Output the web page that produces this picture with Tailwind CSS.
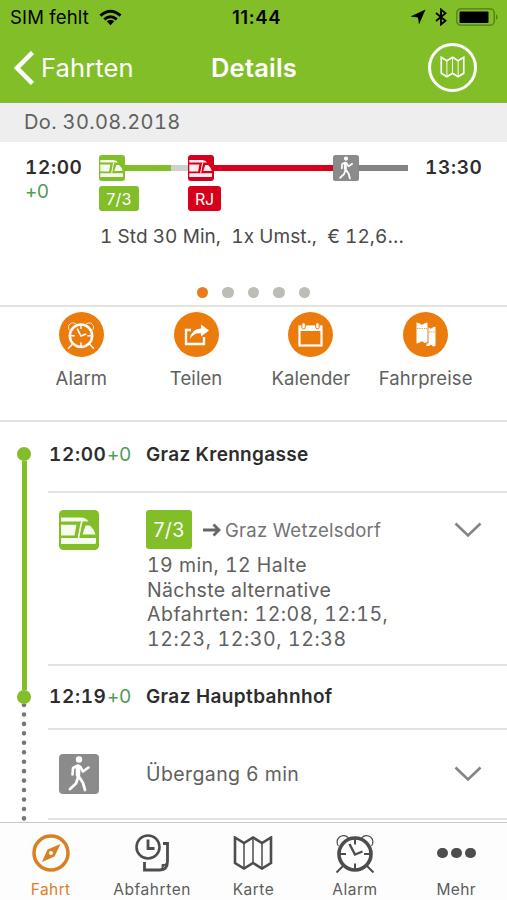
<!DOCTYPE html>
<html lang="de">
<head>
<meta charset="utf-8">
<title>Details</title>
<script src="https://cdn.jsdelivr.net/npm/@tailwindcss/browser@4"></script>
</head>
<body class="w-[507px] h-[900px] overflow-hidden bg-white font-[Inter,sans-serif] text-[#606060] whitespace-nowrap">
<svg class="hidden">
  <defs>
    <symbol id="train" viewBox="0 0 40 40">
      <rect width="40" height="40" rx="4.5" fill="currentColor"/>
      <path d="M2 7.500H22Q27 7.500 29.500 11.500H2ZM2 14.800H17.500L15.500 25.500H2ZM26.500 15.500H31Q35 19 36.500 24.500H23.500ZM2 28H37V32.500Q37 34 35.500 34H2Z" fill="#fff" fill-opacity=".93"/>
      <path d="M23 11.500L22 14.500L19.700 26.500V28" fill="none" stroke="#fff" stroke-opacity=".93" stroke-width="1.600"/>
    </symbol>
    <symbol id="walk" viewBox="0 0 40 40">
      <rect width="40" height="40" rx="4" fill="#8b8b8b"/>
      <circle cx="20" cy="5.500" r="3.200" fill="#fff"/>
      <g fill="none" stroke="#fff" stroke-linecap="round" stroke-linejoin="round">
        <path d="M18 12L14 14L13.500 20.500M21 12.500L24 17.500L29.500 13.500" stroke-width="2.600"/>
        <path d="M19 12.500V21" stroke-width="4.500"/>
        <path d="M19 23.500L17 29.500L11 35M20.500 23.500L24 29L26 36" stroke-width="2.800"/>
      </g>
    </symbol>
    <symbol id="map" viewBox="0 0 40 34">
      <path d="M2 1.500L11 7L20 1.500L29 7L38 1.500V27L29 32.500L20 27L11 32.500L2 27Z" fill="none" stroke="currentColor" stroke-width="2.600"/>
      <path d="M11 7V32M20 2.500V27M29 7V32" fill="none" stroke="currentColor" stroke-width="1.500"/>
    </symbol>
    <symbol id="clock" viewBox="0 0 40 40">
      <g fill="none" stroke="currentColor">
        <path d="M3.500 13A6.200 6.200 0 1 1 13.500 5M26.500 5A6.200 6.200 0 1 1 36.500 13" stroke-width="1.200"/>
        <circle cx="20" cy="21" r="16" stroke-width="3.600"/>
        <path d="M20 5V11.500M20 30.500V37M4 21H11M29 21H36M8 33L1.500 39.500M32 33L38.500 39.500" stroke-width="2"/>
        <path d="M14.500 11L20 21.500L27.500 18.500" stroke-width="2.400"/>
      </g>
    </symbol>
  </defs>
</svg>

<header class="h-[103px] bg-[#82be28] border-b border-[#8fae5c] flex flex-col">
  <div class="h-[34px] grid grid-cols-3 items-center text-black text-[18.500px]">
    <div class="flex items-center pl-[10px] gap-[10px] pt-px">
      <span class="tracking-[0.150px]">SIM fehlt</span>
      <svg class="w-[23px] h-[17px]" viewBox="0 0 24 17" fill="none" stroke="#000" stroke-width="3"><path d="M1.500 6.500Q12-2.500 22.500 6.500M5.500 10.500Q12 4.800 18.500 10.500"/><path d="M8 12.500Q12 9.500 16 12.500L12 16.500Z" fill="#000" stroke="none"/></svg>
    </div>
    <div class="text-center font-semibold tracking-[0.600px] pl-[6px] pt-px">11:44</div>
    <div class="flex items-center justify-end pr-[8px] gap-[9px]">
      <svg class="w-[16px] h-[16px]" viewBox="0 0 16 16"><path d="M15.500 .5L9 15.500L8 8.500L.5 7.500Z"/></svg>
      <svg class="w-[12px] h-[18px]" viewBox="0 0 12 18" fill="none" stroke="#000" stroke-width="1.800"><path d="M1 5L10.500 12.800L6 16.500V1.500L10.500 5.200L1 13"/></svg>
      <svg class="w-[43px] h-[18px]" viewBox="0 0 43 18"><rect x=".8" y=".8" width="37.400" height="16.400" rx="4" fill="none" stroke="#517a17" stroke-width="1.300"/><rect x="3.500" y="3.500" width="29" height="11.500" rx="1"/><path d="M40 6Q43 9 40 12Z" fill="#517a17"/></svg>
    </div>
  </div>
  <div class="h-[68px] grid grid-cols-3 items-center text-white text-[25.500px]">
    <div class="flex items-center pl-[14px] gap-[7px]">
      <svg class="w-[20px] h-[34px]" viewBox="0 0 20 34" fill="none" stroke="#fff" stroke-width="4.500"><path d="M18.500 1.500L3 17L18.500 32.500"/></svg>
      <span class="tracking-[0.100px]">Fahrten</span>
    </div>
    <div class="text-center font-semibold tracking-[0.200px] pl-px">Details</div>
    <div class="flex justify-end pr-[30px] pb-[2px]">
      <div class="size-[49px] rounded-full border-[3px] border-white flex items-center justify-center">
        <svg class="w-[25px] h-[22px]"><use href="#map"/></svg>
      </div>
    </div>
  </div>
</header>

<div class="h-[39px] bg-[#eeeeee] pl-[24px] pb-px flex items-center text-[20px] tracking-[0.350px] tabular-nums">Do. 30.08.2018</div>

<section class="h-[165px] border-b-2 border-[#e2e2e2] pt-[13px] flex flex-col">
  <div class="flex h-[60px]">
    <div class="w-[99px] pl-[25px] leading-[26px] text-[19px] tabular-nums">
      <div class="font-semibold text-[#2d2d2d] tracking-[0.650px]">12:00</div>
      <div class="text-[#4f9b58] leading-[22px] tracking-[-0.500px]">+0</div>
    </div>
    <div class="w-[309px]">
      <div class="flex items-center h-[26px]">
        <svg class="size-[26px] text-[#82be28]"><use href="#train"/></svg>
        <div class="w-[46px] h-[6px] bg-[#82be28]"></div>
        <div class="w-[17px] h-[6px] bg-[#d0d0d0]"></div>
        <svg class="size-[26px] text-[#d6001c]"><use href="#train"/></svg>
        <div class="w-[119px] h-[6px] bg-[#d6001c]"></div>
        <svg class="size-[26px]"><use href="#walk"/></svg>
        <div class="w-[49px] h-[6px] bg-[#848484]"></div>
      </div>
      <div class="flex pt-[5px] gap-[49px] text-white text-[16px] leading-[27px] text-center">
        <div class="w-[40px] h-[25px] rounded-[3px] bg-[#82be28] tracking-[0.300px]">7/3</div>
        <div class="w-[33px] h-[25px] rounded-[3px] bg-[#d6001c] tracking-[-0.100px]">RJ</div>
      </div>
    </div>
    <div class="pl-[17px] leading-[26px] text-[19px] tabular-nums font-semibold text-[#2d2d2d] tracking-[0.650px]">13:30</div>
  </div>
  <div class="pl-[100px] pt-[9px] leading-[26px] text-[19px] text-[#4a4a4a] tracking-[0.060px] tabular-nums whitespace-pre">1 Std 30 Min,  1x Umst.,  € 12,6…</div>
  <div class="flex justify-center gap-[14px] pt-[36.500px]">
    <i class="size-[11.500px] rounded-full bg-[#e87b1c]"></i>
    <i class="size-[11.500px] rounded-full bg-[#bcbdb6]"></i>
    <i class="size-[11.500px] rounded-full bg-[#bcbdb6]"></i>
    <i class="size-[11.500px] rounded-full bg-[#bcbdb6]"></i>
    <i class="size-[11.500px] rounded-full bg-[#bcbdb6]"></i>
  </div>
</section>

<section class="h-[115px] border-b-2 border-[#e2e2e2] pl-[24px] pr-[24px] pt-[5px] grid grid-cols-4 text-[18.500px] leading-[24px]">
  <div class="flex flex-col items-center gap-[9px]">
    <div class="size-[45px] rounded-full bg-[#eb7c0c] text-white flex items-center justify-center"><svg class="size-[28px]"><use href="#clock"/></svg></div>
    <span class="tracking-[0.100px]">Alarm</span>
  </div>
  <div class="flex flex-col items-center gap-[9px]">
    <div class="size-[45px] rounded-full bg-[#eb7c0c] flex items-center justify-center"><svg class="w-[25px] h-[22px]" viewBox="0 0 25 22"><path d="M7 6H2V20H20V13" fill="none" stroke="#fff" stroke-width="2.300"/><path d="M6 15Q7 5 17 4.500V.5L25 6.500L17 12.500V9.500Q10 8.500 6 15Z" fill="#fff"/></svg></div>
    <span class="tracking-[0.100px]">Teilen</span>
  </div>
  <div class="flex flex-col items-center gap-[9px]">
    <div class="size-[45px] rounded-full bg-[#eb7c0c] flex items-center justify-center"><svg class="w-[25px] h-[25px]" viewBox="0 0 25 25"><rect x="1.500" y="4.500" width="22" height="19" fill="none" stroke="#fff" stroke-width="2.200"/><rect x="1.500" y="4" width="22" height="5" fill="#fff"/><rect x="3.800" y=".7" width="3.500" height="6" rx="1.500" fill="#fff" stroke="#eb7c0c" stroke-width="1"/><rect x="17.700" y=".7" width="3.500" height="6" rx="1.500" fill="#fff" stroke="#eb7c0c" stroke-width="1"/></svg></div>
    <span class="tracking-[0.100px]">Kalender</span>
  </div>
  <div class="flex flex-col items-center gap-[9px]">
    <div class="size-[45px] rounded-full bg-[#eb7c0c] flex items-center justify-center"><svg class="w-[20px] h-[25px]" viewBox="0 0 20 25"><path d="M.5 .5L4 1.500Q6 4 8 1.500L11.500 .5V20L8.500 21Q6 18 4 20.500L.5 21.500ZM12.500 5Q14.500 8 16.500 5.500L19.500 4.500V24L17 24.500Q15 21.500 13.500 24L10.500 24V21.500H12.500Z" fill="#fff"/><path d="M1 6.500H11M13 10H19" stroke="#eb7c0c" stroke-width=".8" stroke-dasharray="1.300 1"/></svg></div>
    <span class="tracking-[0.100px]">Fahrpreise</span>
  </div>
</section>

<main class="h-[400px] flex overflow-hidden">
  <div class="w-[48px] pl-[17px]">
    <div class="w-[14px] flex flex-col items-center pt-[25px]">
      <i class="size-[14px] rounded-full bg-[#82be28]"></i>
      <i class="w-[5px] h-[229px] bg-[#82be28]"></i>
      <i class="size-[14px] rounded-full bg-[#82be28]"></i>
      <svg class="w-[6px] h-[120px]" viewBox="0 0 6 120"><path d="M3 1V120" stroke="#777" stroke-width="4.600" stroke-linecap="round" stroke-dasharray="0 9.450"/></svg>
    </div>
  </div>
  <div class="w-[459px]">
    <div class="h-[71px] border-b-2 border-[#e2e2e2] flex items-center pb-[2px] pl-[1px] text-[19px]">
      <div class="w-[97px] flex tabular-nums"><span class="w-[58px] font-semibold text-[#2d2d2d] tracking-[0.650px]">12:00</span><span class="text-[#4f9b58] tracking-[-0.300px]">+0</span></div>
      <div class="font-semibold text-[#2d2d2d] tracking-[0.300px]">Graz Krenngasse</div>
    </div>
    <div class="h-[173px] border-b-2 border-[#e2e2e2] flex pt-[17px]">
      <svg class="size-[40px] ml-[11px] mr-[47px] text-[#82be28]"><use href="#train"/></svg>
      <div class="w-[308px] text-[19.500px] leading-[24.500px] tracking-[0.300px]">
        <div class="h-[39px] flex items-center mb-[4px]">
          <div class="w-[46px] h-[39px] rounded-[3px] bg-[#82be28] text-white text-center leading-[40px]">7/3</div>
          <svg class="w-[18px] h-[14px] ml-[11px] mr-[4px]" viewBox="0 0 18 14" fill="none" stroke="#666" stroke-width="2.800"><path d="M0 7H15.500M10.500 1.500L16 7L10.500 12.500"/></svg>
          <span class="text-[18.500px] tracking-[0.250px] text-[#737373] pt-[2px]">Graz Wetzelsdorf</span>
        </div>
        <div class="pl-px tabular-nums"><span class="tracking-[0.450px]">19 min, 12 Halte</span><br><span class="tracking-[0.320px]">Nächste alternative</span><br><span class="tracking-[0.500px]">Abfahrten: 12:08, 12:15,</span><br><span class="tracking-[0.600px]">12:23, 12:30, 12:38</span></div>
      </div>
      <svg class="w-[28px] h-[16px] mt-[12px]" viewBox="0 0 28 16" fill="none" stroke="#858585" stroke-width="2.600"><path d="M1.500 1.500L14 13.500L26.500 1.500"/></svg>
    </div>
    <div class="h-[64px] border-b-2 border-[#e2e2e2] flex items-center pt-px pl-[1px] text-[19px]">
      <div class="w-[97px] flex tabular-nums"><span class="w-[58px] font-semibold text-[#2d2d2d] tracking-[0.650px]">12:19</span><span class="text-[#4f9b58] tracking-[-0.300px]">+0</span></div>
      <div class="font-semibold text-[#2d2d2d] tracking-[0.380px]">Graz Hauptbahnhof</div>
    </div>
    <div class="h-[90px] border-b-2 border-[#e2e2e2] flex items-center">
      <svg class="size-[40px] ml-[11px] mr-[47px]"><use href="#walk"/></svg>
      <div class="w-[308px] text-[19.500px] tracking-[0.400px] pt-[2px]">Übergang 6 min</div>
      <svg class="w-[28px] h-[16px]" viewBox="0 0 28 16" fill="none" stroke="#858585" stroke-width="2.600"><path d="M1.500 1.500L14 13.500L26.500 1.500"/></svg>
    </div>
  </div>
</main>

<nav class="h-[78px] border-t-[1.500px] border-[#c9c9c9] bg-[#fdfdfd] grid grid-cols-5 text-[15.500px] tracking-[0.250px] text-[#5c5c5c] leading-[20px]">
  <div class="flex flex-col items-center pt-[10px] gap-[7px] text-[#d98025]">
    <svg class="size-[40px]" viewBox="0 0 40 40"><circle cx="20" cy="20" r="17" fill="none" stroke="currentColor" stroke-width="3.500"/><path d="M29.500 11L23.500 23.500L11 29L16.500 16.500Z" fill="currentColor"/><circle cx="20" cy="20" r="2" fill="#fff"/></svg>
    <span class="tracking-[0.400px]">Fahrt</span>
  </div>
  <div class="flex flex-col items-center pt-[10px] gap-[7px]">
    <svg class="size-[40px] text-[#4d4d4d]" viewBox="0 0 40 40" fill="none" stroke="currentColor"><circle cx="16" cy="14" r="11.500" stroke-width="2.600"/><path d="M16 6.500V15.500H22.500" stroke-width="2.800"/><path d="M31 10.500H35.500V28Q35.500 37 28 37H12.500V29" stroke-width="2.800"/><path d="M28.500 37Q31 35 30 31.500Q33 32 35 30Z" stroke-width="1" fill="currentColor"/></svg>
    <span class="tracking-[0.550px]">Abfahrten</span>
  </div>
  <div class="flex flex-col items-center pt-[10px] gap-[7px]">
    <svg class="w-[40px] h-[40px] text-[#4d4d4d] py-[3px]"><use href="#map"/></svg>
    <span class="tracking-[0.500px]">Karte</span>
  </div>
  <div class="flex flex-col items-center pt-[10px] gap-[7px]">
    <svg class="size-[40px] text-[#4d4d4d]"><use href="#clock"/></svg>
    <span class="tracking-[0.500px]">Alarm</span>
  </div>
  <div class="flex flex-col items-center pt-[10px] gap-[7px]">
    <div class="h-[40px] flex items-center gap-[3.500px]"><i class="size-[10.500px] rounded-full bg-[#4d4d4d]"></i><i class="size-[10.500px] rounded-full bg-[#4d4d4d]"></i><i class="size-[10.500px] rounded-full bg-[#4d4d4d]"></i></div>
    <span class="tracking-[0.400px]">Mehr</span>
  </div>
</nav>
</body>
</html>
